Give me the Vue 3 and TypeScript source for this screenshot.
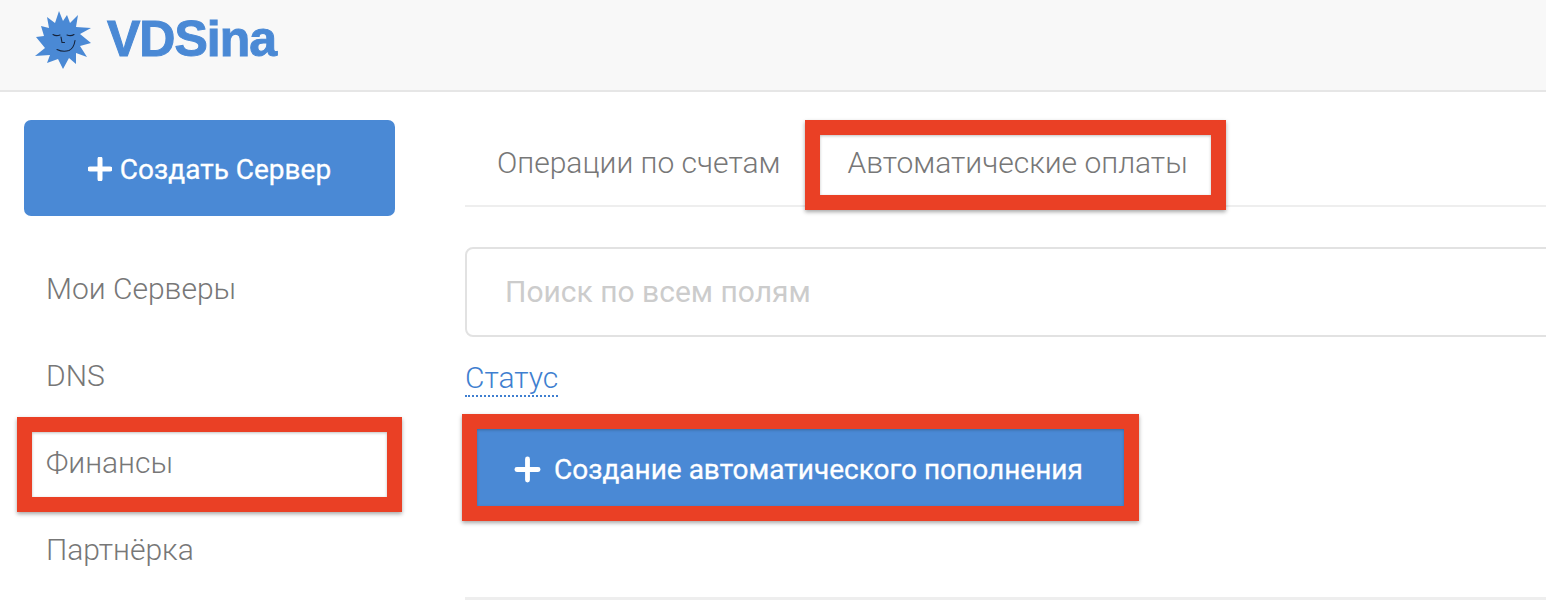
<script setup lang="ts">
const navItems: { label: string; marked?: boolean }[] = [
  { label: 'Мои Серверы' },
  { label: 'DNS' },
  { label: 'Финансы', marked: true },
  { label: 'Партнёрка' },
]
</script>

<template>
  <div class="page">
    <header class="topbar">
      <svg class="sun" viewBox="33 10 62 62" width="62" height="62" aria-hidden="true">
        <polygon
          fill="#4a89d5"
          points="59,11 63,21 67,15 70,23 78,15 76,27 91,28 80,34 91,43 80,46 87,57 76,53 76,64 69,58 63,69 58,59 47,63 50,55 35,56 45,48 36,37 44,36 41,26 49,28 47,17 55,23"
        />
        <g fill="none" stroke="#16233a" stroke-width="1.1" stroke-linecap="round">
          <path d="M53 34.5 Q56 36.5 60 35" />
          <path d="M67 35 Q71 36.5 74 34.5" />
          <path d="M61 37 L62 42.5 L64.5 42.5" />
          <path d="M57 49.5 Q63 52.5 69 50.5 Q74 48 75 40.5" />
        </g>
      </svg>
      <span class="wordmark">VDSina</span>
    </header>

    <div class="layout">
      <aside class="sidebar">
        <button class="create" type="button">
          <svg class="plus" viewBox="0 0 24 24" width="24" height="24" aria-hidden="true">
            <path d="M12 2v20M2 12h20" stroke="#fff" stroke-width="5" stroke-linecap="round" />
          </svg>
          <span>Создать Сервер</span>
        </button>
        <nav class="nav">
          <a v-for="item in navItems" :key="item.label" class="nav-item">
            {{ item.label }}
            <i v-if="item.marked" class="mark mark-nav"></i>
          </a>
        </nav>
      </aside>

      <main class="content">
        <div class="tabs">
          <a class="tab">Операции по счетам</a>
          <a class="tab tab-second">
            Автоматические оплаты
            <i class="mark mark-tab"></i>
          </a>
        </div>

        <input class="search" type="text" placeholder="Поиск по всем полям" />

        <div class="filter"><a class="status">Статус</a></div>

        <button class="autopay" type="button">
          <svg class="plus-lg" viewBox="0 0 28 28" width="27" height="27" aria-hidden="true">
            <path d="M14 3v22M3 14h22" stroke="#fff" stroke-width="5" stroke-linecap="round" />
          </svg>
          <span>Создание автоматического пополнения</span>
          <i class="mark mark-btn"></i>
        </button>

        <div class="rule"></div>
      </main>
    </div>
  </div>
</template>

<style>
html,
body {
  margin: 0;
  overflow: hidden;
  background: #fff;
}
</style>

<style scoped>
.page {
  width: 1546px;
  height: 600px;
  overflow: hidden;
  font-family: Roboto, 'Noto Sans', sans-serif;
  color: #777;
}

.topbar {
  height: 90px;
  background: #f8f8f8;
  border-bottom: 2px solid #e6e6e6;
  display: flex;
  align-items: flex-start;
  padding-left: 33px;
}

.sun {
  margin-top: 10px;
  flex: none;
}

.wordmark {
  margin-left: 12px;
  margin-top: 10px;
  font-family: 'Liberation Sans', sans-serif;
  font-weight: 700;
  font-size: 50px;
  line-height: 58px;
  letter-spacing: -1px;
  -webkit-text-stroke: 1px #4a89d5;
  color: #4a89d5;
}

.layout {
  display: flex;
  padding: 28px 0 0 24px;
}

.sidebar {
  width: 371px;
  flex: none;
}

.create {
  width: 100%;
  height: 96px;
  border: 0;
  border-radius: 7px;
  background: #4a89d5;
  color: #fff;
  font: 400 28px Roboto, sans-serif;
  -webkit-text-stroke: 0.3px #fff;
  display: flex;
  align-items: center;
  justify-content: center;
  gap: 8px;
  padding: 2px 0 0 0;
}

.nav {
  margin-top: 30px;
}

.nav-item {
  position: relative;
  display: flex;
  align-items: center;
  box-sizing: border-box;
  height: 87px;
  padding: 0 0 2px 22px;
  font-size: 30px;
  font-weight: 300;
}

.mark {
  position: absolute;
  border: 15px solid #ea4025;
  box-shadow: 0 2px 4px rgba(0, 0, 0, 0.35), inset 0 1px 3px rgba(0, 0, 0, 0.25);
  pointer-events: none;
}

.mark-nav {
  left: -7px;
  right: -7px;
  top: -3px;
  bottom: -5px;
}

.content {
  margin-left: 70px;
  width: 1100px;
  flex: none;
}

.tabs {
  display: flex;
  height: 85px;
  border-bottom: 2px solid #eee;
}

.tab {
  position: relative;
  padding: 0 32px;
  height: 85px;
  display: flex;
  align-items: center;
  font-size: 30px;
  font-weight: 300;
}

.tab-second {
  margin-left: 3px;
}

.mark-tab {
  left: -10px;
  right: -6px;
  top: 0;
  bottom: -5px;
}

.search {
  display: block;
  box-sizing: border-box;
  width: 100%;
  height: 90px;
  margin-top: 40px;
  padding: 0 38px 2px;
  border: 2px solid #e2e2e2;
  border-radius: 8px;
  outline: 0;
  font: 400 30px Roboto, sans-serif;
  background: #fff;
}

.search::placeholder {
  color: #ccc;
  opacity: 1;
}

.filter {
  margin-top: 23px;
  height: 36px;
}

.status {
  display: inline-block;
  font-size: 30px;
  font-weight: 300;
  line-height: 35px;
  color: #3f7fd0;
  border-bottom: 2px dotted #3f7fd0;
}

.autopay {
  position: relative;
  margin: 33px 0 0 12px;
  width: 647px;
  height: 77px;
  border: 0;
  background: #4a89d5;
  color: #fff;
  font: 400 28px Roboto, sans-serif;
  -webkit-text-stroke: 0.3px #fff;
  display: flex;
  align-items: center;
  gap: 13px;
  padding: 3px 0 0 37px;
}

.mark-btn {
  left: -15px;
  right: -15px;
  top: -15px;
  bottom: -15px;
}

.rule {
  height: 3px;
  margin-top: 91px;
  background: #eee;
}
</style>
